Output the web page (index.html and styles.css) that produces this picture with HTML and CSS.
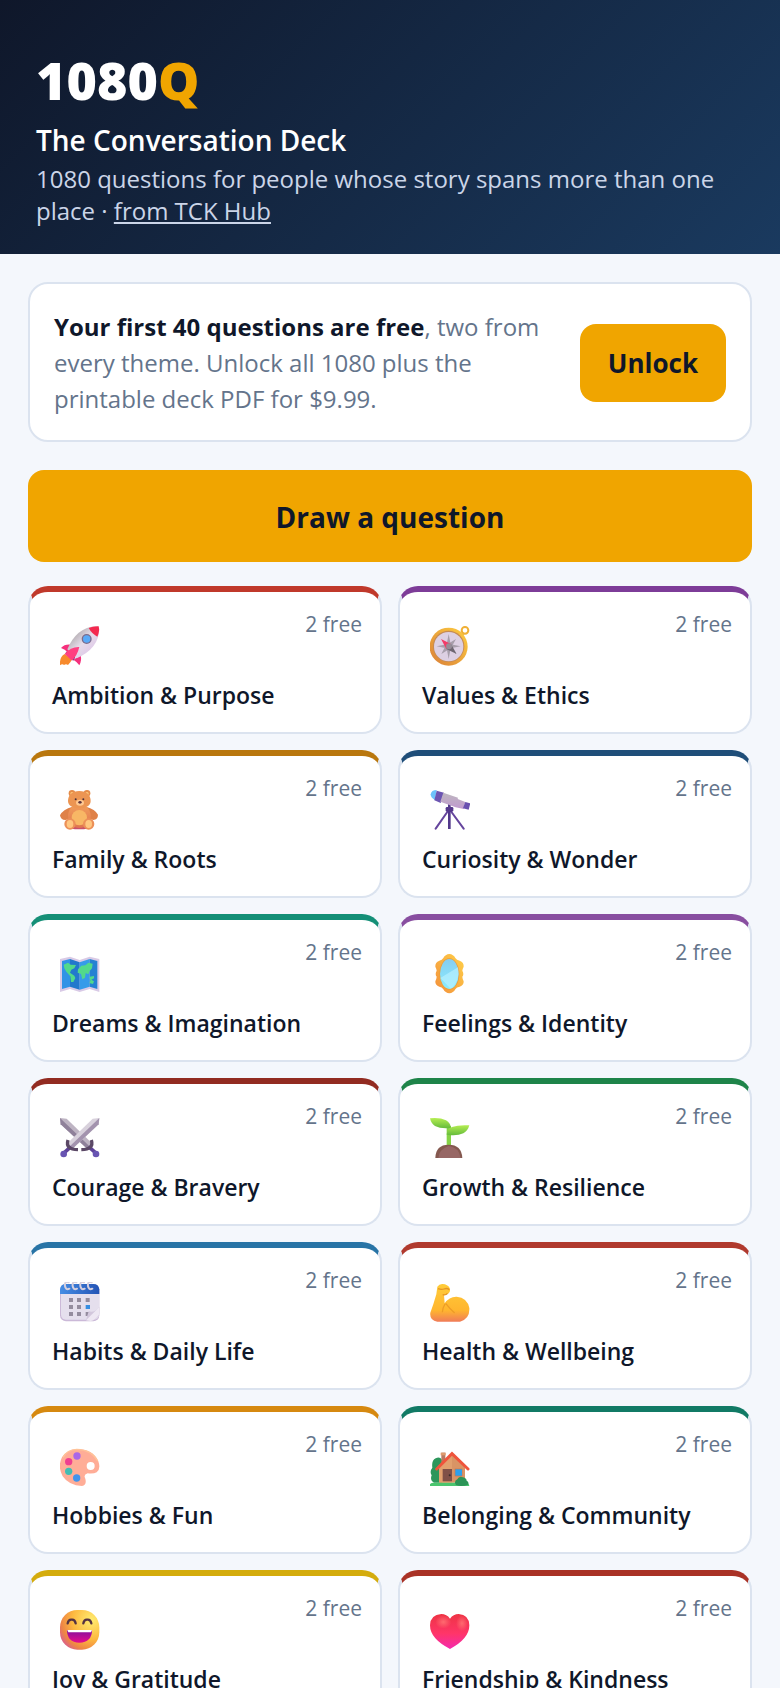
FILE: index.html
```html
<!DOCTYPE html>
<html lang="en">
<head>
    <meta charset="UTF-8">
    <meta name="viewport" content="width=device-width, initial-scale=1.0">
    <title>1080Q - The Conversation Deck</title>
    <link rel="stylesheet" href="styles.css">
</head>
<body>
    <header class="header">
        <h1 class="logo">1080<span>Q</span></h1>
        <h2 class="subtitle">The Conversation Deck</h2>
        <p class="tagline">1080 questions for people whose story spans more than one place · <a href="#">from TCK Hub</a></p>
    </header>

    <main class="main">
        <section class="promo">
            <p><strong>Your first 40 questions are free</strong>, two from every theme. Unlock all 1080 plus the printable deck PDF for $9.99.</p>
            <button class="unlock-btn">Unlock</button>
        </section>

        <button class="draw-btn">Draw a question</button>

        <div class="themes">
            <button class="card ambition">
                <span class="card-top">
                    <svg class="icon" viewBox="0 0 120 120" aria-hidden="true">
                        <defs>
                            <linearGradient id="rocketBody" x1="0" y1="0" x2="1" y2="1"><stop offset=".25" stop-color="#b9b3b8"/><stop offset=".5" stop-color="#e6dcea"/><stop offset="1" stop-color="#d9b9e6"/></linearGradient>
                        </defs>
                        <path d="M14 84Q-2 92 0 118Q7 112 12 117Q18 112 24 117Q32 110 36 100Z" fill="#f78a2c"/>
                        <path d="M16 82l24 22 6-10-22-22z" fill="#4a3b85"/>
                        <path d="M3 66Q14 54 32 56L24 80Q15 70 3 66zM62 88Q66 104 58 118Q52 108 40 101z" fill="#f5307c"/>
                        <path d="M108 1Q50 4 22 70L50 97Q116 68 118 10z" fill="url(#rocketBody)"/>
                        <path d="M86 6Q100 0 116 1Q120 16 112 32Q96 24 86 6z" fill="#f3294f"/>
                        <path d="M58 63Q32 62 14 84L36 104Q52 88 58 63z" fill="#ff3f80"/>
                        <circle cx="80" cy="39" r="15" fill="#7c6c8c"/>
                        <circle cx="80" cy="39" r="11" fill="#58a9f8"/>
                    </svg>
                    <span class="count">2 free</span>
                </span>
                <span class="name">Ambition &amp; Purpose</span>
            </button>

            <button class="card values">
                <span class="card-top">
                    <svg class="icon" viewBox="0 0 120 120" aria-hidden="true">
                        <defs>
                            <linearGradient id="gold" x1="1" y1="0" x2="0" y2="1"><stop offset="0" stop-color="#ffcf3f"/><stop offset="1" stop-color="#d97e38"/></linearGradient>
                        </defs>
                        <circle cx="105" cy="13" r="10" fill="none" stroke="#f0b035" stroke-width="6"/>
                        <path d="M90 16l13 10-9 7z" fill="#f0b035"/>
                        <circle cx="56" cy="62" r="57" fill="url(#gold)"/>
                        <circle cx="56" cy="61" r="47" fill="#c58a55"/>
                        <circle cx="56" cy="62" r="44" fill="#ddd0e3"/>
                        <path d="M56 24l6 31 30 6-30 6-6 32-6-32-30-6 30-6zM34 84l14-27 30-18-15 27z" fill="#a79eab"/>
                        <path d="M33 39l30 15-14 15z" fill="#f23b68"/>
                        <path d="M80 84L63 54 49 69z" fill="#6e6671"/>
                        <circle cx="57" cy="61" r="9" fill="#968d98"/>
                    </svg>
                    <span class="count">2 free</span>
                </span>
                <span class="name">Values &amp; Ethics</span>
            </button>

            <button class="card family">
                <span class="card-top">
                    <svg class="icon" viewBox="0 0 120 120" aria-hidden="true">
                        <defs>
                            <linearGradient id="fur" x1="0" y1="0" x2="0" y2="1"><stop offset="0" stop-color="#f2a05a"/><stop offset="1" stop-color="#df7350"/></linearGradient>
                        </defs>
                        <ellipse cx="58" cy="112" rx="34" ry="6" fill="#c9506a"/>
                        <path d="M38 50Q8 58 0 76Q2 90 16 90Q30 88 42 80zM78 50Q106 58 114 74Q114 88 100 90Q88 88 76 80z" fill="#df8148"/>
                        <circle cx="36" cy="10" r="10" fill="#e48b48"/>
                        <circle cx="81" cy="10" r="10" fill="#e48b48"/>
                        <circle cx="36" cy="11" r="5" fill="#ffcb7c"/>
                        <circle cx="81" cy="11" r="5" fill="#ffcb7c"/>
                        <ellipse cx="58" cy="78" rx="34" ry="36" fill="url(#fur)"/>
                        <circle cx="58" cy="83" r="23" fill="#f8b765"/>
                        <path d="M58 3C80 3 92 16 92 33C92 48 76 55 58 55S24 48 24 33C24 16 36 3 58 3z" fill="#ec9552"/>
                        <ellipse cx="60" cy="38" rx="12" ry="9" fill="#ffc891"/>
                        <circle cx="47" cy="28" r="3" fill="#4d3039"/>
                        <circle cx="70" cy="28" r="3" fill="#4d3039"/>
                        <ellipse cx="60" cy="37" rx="5" ry="4" fill="#5f343d"/>
                        <circle cx="30" cy="102" r="17" fill="#ec9058"/>
                        <circle cx="86" cy="102" r="17" fill="#ec9058"/>
                        <ellipse cx="30" cy="102" rx="10" ry="12" fill="#ffc780"/>
                        <ellipse cx="86" cy="102" rx="10" ry="12" fill="#ffc780"/>
                    </svg>
                    <span class="count">2 free</span>
                </span>
                <span class="name">Family &amp; Roots</span>
            </button>

            <button class="card curiosity">
                <span class="card-top">
                    <svg class="icon" viewBox="0 0 120 120" aria-hidden="true">
                        <defs>
                            <linearGradient id="tube" x1="0" y1="0" x2="0" y2="1"><stop offset="0" stop-color="#bdb7be"/><stop offset="1" stop-color="#c19ad0"/></linearGradient>
                        </defs>
                        <path d="M56 60L17 116M60 60L101 116" stroke="#65459d" stroke-width="6" stroke-linecap="round"/>
                        <path d="M58 42V117" stroke="#52388b" stroke-width="8"/>
                        <rect x="47" y="51" width="23" height="14" rx="4" fill="#55388c"/>
                        <path d="M20 0Q4 0 2 13Q2 24 15 30z" fill="#6cc3fb"/>
                        <path d="M20 2l22 6-10 31-19-8z" fill="#6c55b2"/>
                        <path d="M40 8l44 15-1 4 23 9-5 21-24-5-46-17z" fill="url(#tube)"/>
                        <path d="M106 36l15 4-5 19-17-4z" fill="#6950b0"/>
                    </svg>
                    <span class="count">2 free</span>
                </span>
                <span class="name">Curiosity &amp; Wonder</span>
            </button>

            <button class="card dreams">
                <span class="card-top">
                    <svg class="icon" viewBox="0 0 120 120" aria-hidden="true">
                        <path d="M0 15L30 8 59 18 89 8 118 15V114L89 105 59 114 30 105 0 114z" fill="#d9cae6"/>
                        <path d="M6 21L30 15V98L6 105z" fill="#3193e6"/>
                        <path d="M30 15L59 25V107L30 98z" fill="#2378cc"/>
                        <path d="M59 25L89 15V98L59 107z" fill="#369be9"/>
                        <path d="M89 15L112 21V105L89 98z" fill="#2581d3"/>
                        <path d="M11 32l13-6 8 6 16 1-5 10-9 4-4 9 13 9 3 7-6 12-7 0-2-17-12-14-6-10zM54 46l10-11 12-1 9-8 13 3-2 14-7 8-4 10-8-4-2 14-8 5-4-16-10-4zM88 68l14-2 0 7-8 4 8 5-3 8-11-3 3-7z" fill="#52d98b"/>
                    </svg>
                    <span class="count">2 free</span>
                </span>
                <span class="name">Dreams &amp; Imagination</span>
            </button>

            <button class="card feelings">
                <span class="card-top">
                    <svg class="icon" viewBox="0 0 120 120" aria-hidden="true">
                        <defs>
                            <linearGradient id="frame" x1="1" y1="0" x2="0" y2="1"><stop offset="0" stop-color="#ffd149"/><stop offset="1" stop-color="#f38f3b"/></linearGradient>
                            <linearGradient id="glass" x1="0" y1="0" x2="0" y2="1"><stop offset="0" stop-color="#86cdf0"/><stop offset="1" stop-color="#89edff"/></linearGradient>
                        </defs>
                        <path d="M58 0Q70 1 76 12Q80 19 89 20Q102 24 101 38Q97 46 97 50Q103 60 97 68Q97 73 101 82Q102 94 89 98Q80 99 76 106Q70 117 58 118Q46 117 40 106Q36 99 28 98Q15 94 16 82Q20 73 20 68Q14 60 20 50Q20 46 16 38Q15 24 28 20Q36 19 40 12Q46 1 58 0z" fill="url(#frame)"/>
                        <ellipse cx="58" cy="60" rx="30" ry="47" fill="#eb9c39"/>
                        <ellipse cx="58" cy="60" rx="28" ry="45" fill="url(#glass)"/>
                        <path d="M31 72L84 40Q88 61 81 80Q72 98 62 104z" fill="#bcf1ff" opacity=".65"/>
                    </svg>
                    <span class="count">2 free</span>
                </span>
                <span class="name">Feelings &amp; Identity</span>
            </button>

            <button class="card courage">
                <span class="card-top">
                    <svg class="icon" viewBox="0 0 120 120" aria-hidden="true">
                        <path d="M0 0L20 2 98 78 83 94 2 19z" fill="#beb4c3"/>
                        <path d="M0 0L90 86 83 94 2 19z" fill="#8f819a"/>
                        <path d="M86 86l20 18" stroke="#5d4298" stroke-width="11"/>
                        <path d="M94 66Q103 94 64 95" fill="none" stroke="#5b4866" stroke-width="10"/>
                        <circle cx="108" cy="108" r="10" fill="#6854b2"/>
                        <path d="M118 0L98 2 20 78 36 94 116 19z" fill="#d8d1dc"/>
                        <path d="M118 0L28 86 36 94 116 19z" fill="#a393ae"/>
                        <path d="M33 86l-20 18" stroke="#5d4298" stroke-width="11"/>
                        <path d="M24 66Q15 94 54 95" fill="none" stroke="#5b4866" stroke-width="10"/>
                        <circle cx="11" cy="108" r="10" fill="#6854b2"/>
                    </svg>
                    <span class="count">2 free</span>
                </span>
                <span class="name">Courage &amp; Bravery</span>
            </button>

            <button class="card growth">
                <span class="card-top">
                    <svg class="icon" viewBox="0 0 120 120" aria-hidden="true">
                        <defs>
                            <linearGradient id="leaf" x1="0" y1="0" x2="0" y2="1"><stop offset="0" stop-color="#b5ee52"/><stop offset="1" stop-color="#65bb3c"/></linearGradient>
                        </defs>
                        <path d="M50 24h13v66H50z" fill="#86d346"/>
                        <path d="M0 1Q30-2 48 7Q63 16 62 30Q32 33 15 24Q3 16 0 1z" fill="url(#leaf)"/>
                        <path d="M118 22Q85 20 66 27Q50 34 50 50Q80 55 100 46Q114 38 118 22z" fill="url(#leaf)"/>
                        <path d="M16 120Q17 80 56 80T97 120z" fill="#84584f"/>
                        <path d="M25 120Q27 94 56 84Q86 87 92 120z" fill="#976765"/>
                    </svg>
                    <span class="count">2 free</span>
                </span>
                <span class="name">Growth &amp; Resilience</span>
            </button>

            <button class="card habits">
                <span class="card-top">
                    <svg class="icon" viewBox="0 0 120 120" aria-hidden="true">
                        <defs>
                            <linearGradient id="calTop" x1="0" y1="0" x2="1" y2="0"><stop offset="0" stop-color="#468de4"/><stop offset="1" stop-color="#2454b5"/></linearGradient>
                        </defs>
                        <rect x="0" y="6" width="118" height="112" rx="18" fill="#cbb9d8"/>
                        <rect x="3" y="8" width="114" height="105" rx="15" fill="#e5dfed"/>
                        <path d="M0 36V22Q2 6 18 6H100Q116 6 118 22V36z" fill="url(#calTop)"/>
                        <path d="M26 1Q13-3 15 12Q17 25 28 20M49 1Q36-3 38 12Q40 25 51 20M72 1Q59-3 61 12Q63 25 74 20M95 1Q82-3 84 12Q86 25 97 20" fill="none" stroke="#d6cfde" stroke-width="6" stroke-linecap="round"/>
                        <path d="M27 48h12v12H27zM51 48h12v12H51zM77 48h12v12H77zM27 69h12v12H27zM51 69h12v12H51zM27 90h12v12H27zM51 90h12v12H51zM77 90h12v12H77z" fill="#948c9e"/>
                        <path d="M77 69h13v12H77z" fill="#378ee2"/>
                        <path d="M78 115L86 88Q105 93 118 74V96Q112 111 97 117z" fill="#d2c7dc"/>
                        <path d="M78 115L118 75V96Q107 114 92 117z" fill="#eee8f3"/>
                    </svg>
                    <span class="count">2 free</span>
                </span>
                <span class="name">Habits &amp; Daily Life</span>
            </button>

            <button class="card health">
                <span class="card-top">
                    <svg class="icon" viewBox="0 0 120 120" aria-hidden="true">
                        <defs>
                            <linearGradient id="skin" x1="0" y1="0" x2="0" y2="1"><stop offset="0" stop-color="#ffcc38"/><stop offset=".7" stop-color="#ffb52f"/><stop offset="1" stop-color="#f07c58"/></linearGradient>
                        </defs>
                        <path d="M22 14Q28 5 38 6Q53 7 59 18Q63 30 54 36L42 40 44 64Q58 43 80 44Q112 47 118 78Q120 111 90 119H22Q-2 116 1 92Q11 66 19 37z" fill="url(#skin)"/>
                        <path d="M45 66Q37 79 37 91M47 64Q61 82 74 93" fill="none" stroke="#ed9c27" stroke-width="4"/>
                        <path d="M24 20Q34 24 42 21Q52 17 58 23M38 38Q48 40 52 34" fill="none" stroke="#e59424" stroke-width="4"/>
                    </svg>
                    <span class="count">2 free</span>
                </span>
                <span class="name">Health &amp; Wellbeing</span>
            </button>

            <button class="card hobbies">
                <span class="card-top">
                    <svg class="icon" viewBox="0 0 120 120" aria-hidden="true">
                        <path fill-rule="evenodd" d="M50 9Q99 9 115 46Q123 69 110 79Q101 84 83 82Q69 86 76 98Q81 117 66 120Q27 119 8 91Q-8 61 6 34Q20 11 50 9zM92 48A12 12 0 1 0 92 72A12 12 0 1 0 92 48z" fill="#ffad97"/>
                        <path d="M9 34Q22 11 50 10Q95 11 113 45" fill="none" stroke="#ffc398" stroke-width="4"/>
                        <circle cx="51" cy="30" r="11" fill="#aa66e8"/>
                        <circle cx="26" cy="47" r="11" fill="#ef3f91"/>
                        <circle cx="26" cy="76" r="11" fill="#43bdb3"/>
                        <circle cx="50" cy="96" r="11" fill="#4294ec"/>
                    </svg>
                    <span class="count">2 free</span>
                </span>
                <span class="name">Hobbies &amp; Fun</span>
            </button>

            <button class="card belonging">
                <span class="card-top">
                    <svg class="icon" viewBox="0 0 120 120" aria-hidden="true">
                        <path d="M17 37Q29 31 36 41V110H12Q-1 104 5 88Q-2 76 7 65Q4 43 17 37z" fill="#2d965b"/>
                        <rect x="34" y="20" width="12" height="38" fill="#ba7961"/>
                        <rect x="32" y="20" width="15" height="8" fill="#df9b6f"/>
                        <path d="M27 62L66 24 105 64V110H27z" fill="#d99465"/>
                        <path d="M27 62L66 24 66 110H27z" fill="#e2a06e"/>
                        <rect x="38" y="69" width="28" height="37" fill="#805047"/>
                        <circle cx="59" cy="88" r="3" fill="#3b2b2b"/>
                        <rect x="74" y="68" width="23" height="23" fill="#c77650"/>
                        <rect x="76" y="70" width="20" height="19" fill="#2ca0ed"/>
                        <path d="M20 69L66 23 114 69" fill="none" stroke="#ef543c" stroke-width="9" stroke-linecap="round"/>
                        <path d="M0 120V115Q2 110 9 110H112Q118 112 118 120z" fill="#4ac56e"/>
                        <path d="M75 111Q74 103 82 100Q87 89 99 94Q109 96 110 104Q118 108 114 116Q94 123 78 117z" fill="#2c9457"/>
                    </svg>
                    <span class="count">2 free</span>
                </span>
                <span class="name">Belonging &amp; Community</span>
            </button>

            <button class="card joy">
                <span class="card-top">
                    <svg class="icon" viewBox="0 0 120 120" aria-hidden="true">
                        <defs>
                            <radialGradient id="face" cx=".8" cy=".25" r=".9"><stop offset="0" stop-color="#ffec70"/><stop offset=".55" stop-color="#fdb83f"/><stop offset=".85" stop-color="#ee8545"/><stop offset="1" stop-color="#dd6582"/></radialGradient>
                            <linearGradient id="mouth" x1="0" y1="0" x2="0" y2="1"><stop offset="0" stop-color="#83109d"/><stop offset="1" stop-color="#e40b8c"/></linearGradient>
                        </defs>
                        <rect width="118" height="119" rx="52" fill="url(#face)"/>
                        <path d="M23 40Q25 28 35 29Q45 28 47 40M70 40Q72 28 82 29Q92 28 94 40" fill="none" stroke="#553242" stroke-width="7" stroke-linecap="round"/>
                        <path d="M21 60H96Q96 97 58 98Q21 97 21 60z" fill="url(#mouth)"/>
                        <path d="M22 60H96L93 67H25z" fill="#fff"/>
                    </svg>
                    <span class="count">2 free</span>
                </span>
                <span class="name">Joy &amp; Gratitude</span>
            </button>

            <button class="card friendship">
                <span class="card-top">
                    <svg class="icon" viewBox="0 0 120 120" aria-hidden="true">
                        <defs>
                            <linearGradient id="heart" x1="0" y1="0" x2="0" y2="1"><stop offset="0" stop-color="#ee3444"/><stop offset=".55" stop-color="#ff3568"/><stop offset="1" stop-color="#f42aaf"/></linearGradient>
                            <radialGradient id="shine"><stop offset="0" stop-color="#ff6a70"/><stop offset="1" stop-color="#ff6a70" stop-opacity="0"/></radialGradient>
                        </defs>
                        <path d="M60 26Q50 12 34 12Q1 14 0 46Q0 86 60 117Q118 86 118 46Q117 14 86 12Q70 12 60 26z" fill="url(#heart)"/>
                        <ellipse cx="40" cy="36" rx="24" ry="20" fill="url(#shine)"/>
                        <ellipse cx="96" cy="40" rx="18" ry="24" fill="url(#shine)"/>
                    </svg>
                    <span class="count">2 free</span>
                </span>
                <span class="name">Friendship &amp; Kindness</span>
            </button>
        </div>
    </main>
</body>
</html>
```
FILE: styles.css
```css
* {
    box-sizing: border-box;
}

body {
    margin: 0;
    font-family: "Open Sans", "Noto Sans", sans-serif;
    background-color: #f4f7fc;
    color: #0f172a;
}

h1,
h2,
p {
    margin: 0;
}

button {
    font-family: inherit;
    color: inherit;
    cursor: pointer;
}

.header {
    padding: 50px 36px 27px;
    background: linear-gradient(135deg, #0f172a, #1a3a5f);
    color: white;
}

.logo {
    font-size: 52px;
    font-weight: 800;
    line-height: 60px;
}

.logo span {
    color: #f0a500;
}

.subtitle {
    margin-top: 12px;
    font-size: 28px;
    font-weight: 600;
    line-height: 36px;
}

.tagline {
    margin-top: 5px;
    font-size: 24px;
    line-height: 32px;
    color: #cbd5e8;
}

.tagline a {
    color: inherit;
}

.main {
    padding: 28px;
}

.promo {
    display: flex;
    align-items: center;
    justify-content: space-between;
    gap: 24px;
    padding: 25px 24px 23px;
    background-color: white;
    border: 2px solid #dbe3ef;
    border-radius: 20px;
}

.promo p {
    font-size: 24px;
    line-height: 36px;
    color: #64748b;
}

.promo strong {
    color: #0f172a;
}

.unlock-btn {
    flex-shrink: 0;
    padding: 20px 28px;
    font-size: 26px;
    font-weight: 700;
    line-height: 38px;
    background-color: #f0a500;
    border: none;
    border-radius: 16px;
}

.draw-btn {
    width: 100%;
    margin: 28px 0 24px;
    padding: 28px 24px 26px;
    font-size: 28px;
    font-weight: 700;
    line-height: 38px;
    background-color: #f0a500;
    border: none;
    border-radius: 16px;
}

.themes {
    display: grid;
    grid-template-columns: 1fr 1fr;
    gap: 16px;
}

.card {
    display: flex;
    flex-direction: column;
    gap: 13px;
    padding: 16px 18px 21px 22px;
    text-align: left;
    background-color: white;
    border: 2px solid #dbe3ef;
    border-top: 6px solid;
    border-radius: 20px;
}

.card-top {
    display: flex;
    justify-content: space-between;
    width: 100%;
}

.icon {
    width: 40px;
    height: 40px;
    margin: 18px 0 0 8px;
}

.count {
    font-size: 21px;
    line-height: 32px;
    color: #64748b;
}

.name {
    font-size: 23px;
    font-weight: 600;
    line-height: 32px;
}

.ambition { border-top-color: #c0392b; }
.values { border-top-color: #7d3c98; }
.family { border-top-color: #b9770e; }
.curiosity { border-top-color: #1f4e79; }
.dreams { border-top-color: #148f77; }
.feelings { border-top-color: #884ea0; }
.courage { border-top-color: #922b21; }
.growth { border-top-color: #1e8449; }
.habits { border-top-color: #2874a6; }
.health { border-top-color: #b03a2e; }
.hobbies { border-top-color: #d68910; }
.belonging { border-top-color: #117a65; }
.joy { border-top-color: #d4ac0d; }
.friendship { border-top-color: #a93226; }
```
